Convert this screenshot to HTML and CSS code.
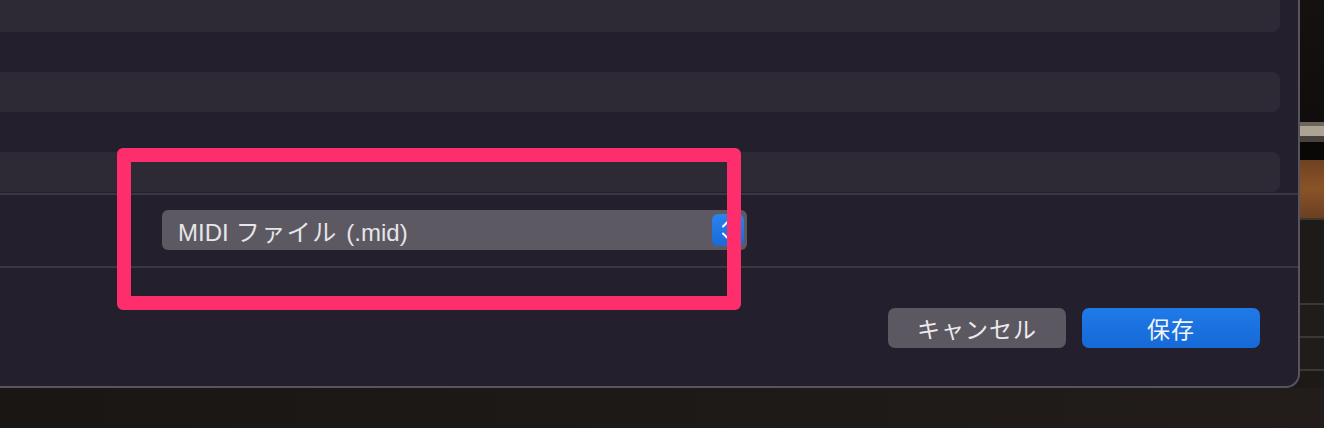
FILE: index.html
```html
<!DOCTYPE html>
<html lang="ja">
<head>
<meta charset="utf-8">
<title>保存</title>
<link rel="stylesheet" href="styles.css">
</head>
<body>
<div class="screen">
  <div class="top">
    <div class="dialog">
      <div class="list">
        <div class="row"></div>
        <div class="row"></div>
        <div class="row"></div>
      </div>
      <div class="format">
        <div class="popup">
          <span class="popup-label">MIDI<span class="jp">ファイル</span> (.mid)</span>
          <span class="stepper">
            <svg width="32" height="32" viewBox="0 0 32 32" aria-hidden="true">
              <path d="M11 12.5 L16 7.5 L21 12.5" fill="none" stroke="#fff" stroke-width="2" stroke-linecap="round" stroke-linejoin="round"/>
              <path d="M11 19.5 L16 24.5 L21 19.5" fill="none" stroke="#fff" stroke-width="2" stroke-linecap="round" stroke-linejoin="round"/>
            </svg>
          </span>
        </div>
        <div class="highlight"></div>
      </div>
      <div class="footer">
        <button class="btn btn-cancel">キャンセル</button>
        <button class="btn btn-save">保存</button>
      </div>
    </div>
    <div class="strip">
      <div class="s s-dark"></div>
      <div class="s s-edge"></div>
      <div class="s s-beige"></div>
      <div class="s s-edge2"></div>
      <div class="s s-black"></div>
      <div class="s s-brown"></div>
      <div class="s s-line"></div>
      <div class="s s-shelf"></div>
      <div class="s s-line"></div>
      <div class="s s-shelf2"></div>
      <div class="s s-line"></div>
      <div class="s s-shelf2"></div>
      <div class="s s-line"></div>
      <div class="s s-rest"></div>
    </div>
  </div>
  <div class="bottom"></div>
</div>
</body>
</html>
```

FILE: styles.css
```css
* { box-sizing: border-box; }

html, body {
  margin: 0;
  padding: 0;
  width: 1324px;
  height: 428px;
  overflow: hidden;
  background: #1c1816;
  font-family: "Liberation Sans", "Noto Sans CJK JP", sans-serif;
}

.screen {
  display: flex;
  flex-direction: column;
  width: 1324px;
  height: 428px;
}

.top {
  display: flex;
  height: 388px;
  background: #1c1816;
}

.dialog {
  width: 1300px;
  height: 388px;
  background: #231f2c;
  border-right: 2px solid #57545e;
  border-bottom: 2px solid #57545e;
  border-bottom-right-radius: 14px;
  display: flex;
  flex-direction: column;
  overflow: hidden;
}

.list {
  display: flex;
  flex-direction: column;
  gap: 40px;
  margin-top: -8px;
  margin-left: -20px;
  padding-right: 18px;
  padding-bottom: 1px;
}

.row {
  height: 40px;
  background: #2d2a36;
  border-radius: 8px;
}

.format {
  position: relative;
  height: 75px;
  border-top: 2px solid #3a3743;
  border-bottom: 2px solid #3a3743;
  padding: 15px 0 0 162px;
}

.popup {
  width: 585px;
  height: 40px;
  background: #5c5963;
  border-radius: 6px;
  display: flex;
  align-items: center;
  justify-content: space-between;
  padding: 0 3px 0 16px;
}

.popup-label {
  color: #e6e5e9;
  font-size: 24px;
  word-spacing: 2px;
}

.popup-label .jp {
  margin-left: 7px;
  letter-spacing: 1.5px;
}

.stepper {
  width: 32px;
  height: 32px;
  border-radius: 6px;
  background: linear-gradient(#2a83ee, #1a6ad8);
  display: flex;
}

.highlight {
  position: absolute;
  left: 117px;
  top: -47px;
  width: 624px;
  height: 162px;
  border: 14px solid #fe2e6d;
  border-radius: 6px;
}

.footer {
  flex: 1;
  display: flex;
  justify-content: flex-end;
  align-items: flex-start;
  gap: 16px;
  padding: 40px 38px 0 0;
}

.btn {
  width: 178px;
  height: 40px;
  border: none;
  border-radius: 7px;
  font-family: "Liberation Sans", "Noto Sans CJK JP", sans-serif;
  font-size: 23px;
  color: #ecebee;
  padding: 0;
}

.btn-cancel {
  background: #5b5861;
  letter-spacing: 1px;
}

.btn-save {
  background: linear-gradient(#1f7ae8, #1669d6);
  color: #f2f4f8;
  letter-spacing: 1px;
}

.strip {
  flex: 1;
  display: flex;
  flex-direction: column;
}

.s { width: 100%; }
.s-dark { height: 122px; background: linear-gradient(#141110, #100d0c); }
.s-edge { height: 4px; background: #6c665d; }
.s-beige { height: 10px; background: #aca392; }
.s-edge2 { height: 6px; background: #47423c; }
.s-black { height: 18px; background: #0a0807; }
.s-brown { height: 58px; background: linear-gradient(#6e4220, #8a5328 50%, #6a4021); }
.s-line { height: 2px; background: #3b3735; }
.s-shelf { height: 83px; background: #1d1a18; }
.s-shelf2 { height: 31px; background: #1f1c1a; }
.s-rest { flex: 1; background: #1c1917; }

.bottom {
  flex: 1;
  background: linear-gradient(90deg, #1a1614, #1e1a18 60%, #221d1a);
}
```
